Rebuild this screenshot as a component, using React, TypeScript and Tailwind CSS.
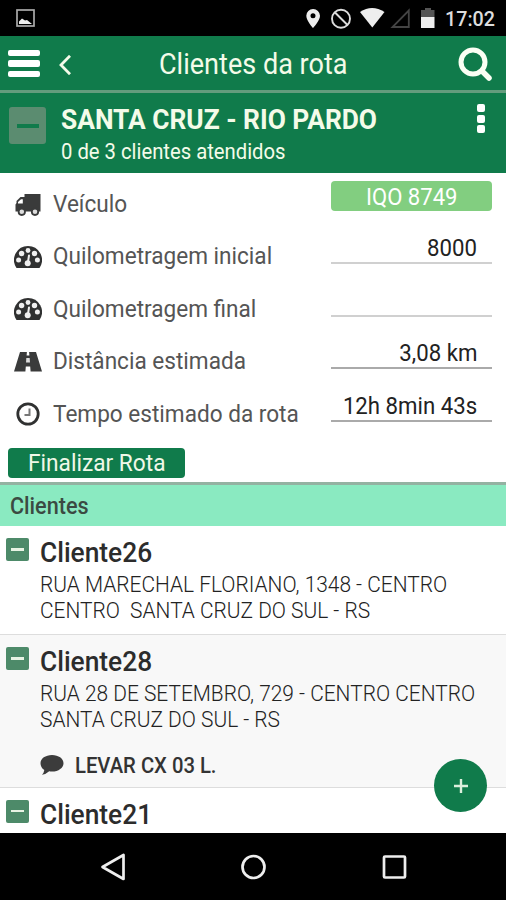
import type { ReactNode } from 'react';
import clsx from 'clsx';

const TruckIcon = () => (
    <svg className="mt-[2px] h-[22px] w-[26px]" viewBox="0 0 26 22">
        <path fill="#3a3b3b" d="M9.500 0H25.500V17.500H.5V10.500L1.500 9V7L5.500 3H9.500Z" />
        <path fill="#fff" d="M3 9.500V8L6 5.200H7.800V9.500Z" />
        <circle cx="6.800" cy="17.800" r="3.200" fill="#ddd" stroke="#3a3b3b" strokeWidth="1.800" />
        <circle cx="20" cy="17.800" r="3.200" fill="#ddd" stroke="#3a3b3b" strokeWidth="1.800" />
    </svg>
);

const GaugeIcon = () => (
    <svg className="mt-px h-7 w-7" viewBox="0 0 28 28">
        <path fill="#303131" d="M14 3A14 14 0 0 1 25.800 24.500Q25.400 25 24.800 25H3.200Q2.600 25 2.200 24.500A14 14 0 0 1 14 3Z" />
        <g fill="#f0f0f0">
            <circle cx="4.600" cy="17" r="2.500" />
            <circle cx="7.600" cy="10.500" r="2.700" />
            <circle cx="14" cy="7.500" r="2.400" />
            <circle cx="20.500" cy="10.500" r="2.700" />
            <circle cx="23.400" cy="17" r="2.500" />
            <circle cx="13.700" cy="20.300" r="3" />
        </g>
        <path d="M14 19L15 12.500" stroke="#f0f0f0" strokeWidth="2" strokeLinecap="round" />
    </svg>
);

const RoadIcon = () => (
    <svg className="mt-px h-5 w-7" viewBox="0 0 28 20">
        <path fill="#3a3b3b" d="M6 0H12.900L12.600 3.500H15.400L15.100 0H22L28 19.500H16.600L16.200 14.500H11.800L11.400 19.500H0Z" />
        <path fill="#ddd" d="M12.300 6H15.700L16 10.500H12Z" />
    </svg>
);

const ClockIcon = () => (
    <svg className="h-6 w-6" viewBox="0 0 24 24" fill="none">
        <circle cx="12" cy="12" r="10.200" stroke="#303131" strokeWidth="2.800" />
        <path d="M13.500 6.500V13H8.500" stroke="#777" strokeWidth="2" />
    </svg>
);

const CommentIcon = () => (
    <svg className="h-5 w-6" viewBox="0 0 24 20" fill="#3c3c3c">
        <path d="M12 0C18.500 0 23.500 3.600 23.500 8.200S18.500 16.500 12 16.500Q10.500 16.500 9.200 16.200Q6.300 19 2 19.700Q4 17.800 4.300 15Q.5 12.500 .5 8.200C.5 3.600 5.500 0 12 0Z" />
    </svg>
);

function StatusBar() {
    return (
        <div className="flex h-9 items-center justify-between bg-black pr-[10px] pl-4">
            <svg className="h-[18px] w-[19px]" viewBox="0 0 19 18">
                <rect x="1" y="1" width="17" height="16" fill="none" stroke="#aaa" strokeWidth="1.700" />
                <path d="M3 15V12.500L6 9.500L9 11.500L11 11L16 15Z" fill="#eee" />
            </svg>
            <svg className="h-9 w-[190px]" viewBox="306 0 190 36">
                <path fillRule="evenodd" fill="#eee" d="M313 9A6.800 6.800 0 0 0 306.300 15.700C306.300 20.500 313 28 313 28S320 20.500 320 15.700A6.800 6.800 0 0 0 313 9ZM313 13.300A2.500 2.500 0 1 1 313 18.300A2.500 2.500 0 1 1 313 13.300Z" />
                <circle cx="341" cy="18.700" r="9" fill="none" stroke="#ddd" strokeWidth="1.900" />
                <path d="M335 12.500L347.500 25" stroke="#ddd" strokeWidth="1.900" />
                <path d="M360 12Q372 4 384.500 12L372.300 27.500Z" fill="#eee" />
                <path d="M392.500 27H408.800V10.500Z" fill="none" stroke="#444" strokeWidth="1.800" />
                <path d="M421 10H425V8H431V10H434.500V17H421Z" fill="#555" />
                <path d="M421 17H434.500V28H421Z" fill="#eee" />
                <text x="445" y="26" textLength="50" lengthAdjust="spacingAndGlyphs" fontFamily="Roboto, sans-serif" fontSize="20.500" fontWeight="500" fill="#ddd">17:02</text>
            </svg>
        </div>
    );
}

function Header() {
    return (
        <header className="flex h-[57px] items-center border-b-[3px] border-[#649c7d] bg-[#107b4b] text-[#f4fbe9]">
            <div className="mt-px ml-2 flex w-8 flex-col gap-[4px]">
                <span className="h-[6.500px] rounded-[2px] bg-white" />
                <span className="h-[6.500px] rounded-[2px] bg-white" />
                <span className="h-[6.500px] rounded-[2px] bg-white" />
            </div>
            <svg className="mt-[3px] ml-[19px] h-5 w-3" viewBox="0 0 12 20" fill="none" stroke="currentColor" strokeWidth="2.800">
                <path d="M11 .8L2 10L11 19.200" />
            </svg>
            <h1 className="mt-[3px] ml-[88px] w-[299px] origin-left scale-x-[.933] text-[29px] whitespace-nowrap">Clientes da rota</h1>
            <svg className="mt-[3px] h-9 w-9 text-[#fbfff4]" viewBox="0 0 36 36" fill="none" stroke="currentColor">
                <circle cx="15" cy="15" r="12" strokeWidth="5" />
                <path d="M24 24L31 31" strokeWidth="5.500" strokeLinecap="round" />
            </svg>
        </header>
    );
}

function RouteBar() {
    return (
        <section className="flex h-[80px] items-start bg-[#107b4b] text-[#f4fbe9]">
            <div className="mt-[14px] ml-[9px] flex h-[37px] w-[37px] items-center justify-center rounded-[3px] bg-[#5b8c70]">
                <span className="h-[4px] w-[22px] bg-[#107b4b]" />
            </div>
            <div className="mt-[11px] ml-[15px] w-[412px] whitespace-nowrap">
                <h2 className="origin-left scale-x-[.94] text-[28px] leading-8 font-bold">SANTA CRUZ - RIO PARDO</h2>
                <p className="origin-left scale-x-[.9] text-[22.500px] leading-[30px]">0 de 3 clientes atendidos</p>
            </div>
            <div className="mt-[11px] ml-[3.500px] flex flex-col gap-[2.500px]">
                <span className="h-[8px] w-[8px] rounded-[2px] bg-white" />
                <span className="h-[8px] w-[8px] rounded-[2px] bg-white" />
                <span className="h-[8px] w-[8px] rounded-[2px] bg-white" />
            </div>
        </section>
    );
}

type FieldProps = { icon: ReactNode; label: string; value?: string; pill?: boolean; dark?: boolean };

function Field({ icon, label, value, pill, dark }: FieldProps) {
    return (
        <div className="flex h-[52.400px] items-start">
            <div className="ml-[14px] flex h-[46px] w-7 items-center justify-center">{icon}</div>
            <span className="ml-[11px] w-[278px] origin-left scale-x-[.941] text-[24px] leading-[47px] whitespace-nowrap text-[#555]">{label}</span>
            {pill ? (
                <div className="h-[30px] w-[161px] rounded-[4px] bg-[#82ce80] text-center text-[24px] leading-[32px] text-white">
                    <span className="inline-block scale-x-[.92]">{value}</span>
                </div>
            ) : (
                <div className={clsx('h-[31px] w-[161px] border-b-2 pr-[15px] text-right text-[24px] leading-[31px] text-[#222]', dark ? 'border-[#aaa]' : 'border-[#d0d0d0]')}>
                    <span className="inline-block origin-right scale-x-[.925] whitespace-nowrap">{value}</span>
                </div>
            )}
        </div>
    );
}

type ClientProps = { name: string; address?: string[]; note?: string; className: string };

function Client({ name, address = [], note, className }: ClientProps) {
    return (
        <li className={clsx('flex items-start', className)}>
            <div className="mt-[12px] ml-[6px] flex h-[23px] w-[23px] shrink-0 items-center justify-center rounded-[2px] bg-[#4d8a69]">
                <span className="h-[2.500px] w-[13px] bg-[#e8f3e4]" />
            </div>
            <div className="mt-[10px] ml-[11px] whitespace-nowrap">
                <h3 className="mb-px origin-left scale-x-[.94] text-[28px] leading-[34px] font-medium text-[#2c2c2c]">{name}</h3>
                {address.map((line) => (
                    <p key={line} className="origin-left scale-x-[.929] text-[22.500px] leading-[26px] font-light whitespace-pre text-[#222]">{line}</p>
                ))}
                {note && (
                    <div className="mt-[20px] flex h-[26px] items-center">
                        <CommentIcon />
                        <span className="ml-[11px] origin-left scale-x-[.92] text-[22px] font-medium text-[#333]">{note}</span>
                    </div>
                )}
            </div>
        </li>
    );
}

export default function App() {
    return (
        <div className="relative flex h-[900px] w-[506px] flex-col overflow-hidden bg-white font-['Roboto',sans-serif]">
            <StatusBar />
            <Header />
            <RouteBar />
            <main className="h-[309px] pt-[8px]">
                <Field icon={<TruckIcon />} label="Veículo" value="IQO 8749" pill />
                <Field icon={<GaugeIcon />} label="Quilometragem inicial" value="8000" />
                <Field icon={<GaugeIcon />} label="Quilometragem final" />
                <Field icon={<RoadIcon />} label="Distância estimada" value="3,08 km" dark />
                <Field icon={<ClockIcon />} label="Tempo estimado da rota" value="12h 8min 43s" dark />
                <button className="mt-[5px] ml-2 block h-[30px] w-[177px] rounded-[4px] bg-[#107b4b] text-[24px] leading-[30px] text-[#f0f8e8]">
                    <span className="inline-block scale-x-[.945] whitespace-nowrap">Finalizar Rota</span>
                </button>
            </main>
            <div className="h-[44px] border-t-[3px] border-[#94b2a2] bg-[#8aeac1] pl-[10px] text-[24px] leading-[43px] font-medium text-[#3b4a42]">
                <span className="inline-block origin-left scale-x-[.9]">Clientes</span>
            </div>
            <ul className="h-[307px] overflow-hidden">
                <Client name="Cliente26" address={['RUA MARECHAL FLORIANO, 1348 - CENTRO', 'CENTRO  SANTA CRUZ DO SUL - RS']} className="h-[108px]" />
                <Client name="Cliente28" address={['RUA 28 DE SETEMBRO, 729 - CENTRO CENTRO', 'SANTA CRUZ DO SUL - RS']} note="LEVAR CX 03 L." className="h-[152.500px] border-t border-[#ddd] bg-[#f8f8f8]" />
                <Client name="Cliente21" className="h-[46.500px] border-t border-[#ddd]" />
            </ul>
            <button className="absolute top-[759px] left-[434px] flex h-[53px] w-[53px] items-center justify-center rounded-full bg-[#107b4b]">
                <svg className="h-[14px] w-[14px]" viewBox="0 0 14 14" stroke="#dcefdc" strokeWidth="2.400">
                    <path d="M7 0V14M0 7H14" />
                </svg>
            </button>
            <nav className="flex h-[67px] items-center bg-black">
                <svg className="h-[67px] w-[506px]" viewBox="0 833 506 67" fill="none" stroke="#eee" strokeWidth="2.700">
                    <path d="M123.500 855V879L102.500 867Z" strokeLinejoin="round" />
                    <circle cx="253.500" cy="867" r="11" />
                    <rect x="384" y="856.500" width="21" height="21" rx="1" />
                </svg>
            </nav>
        </div>
    );
}
